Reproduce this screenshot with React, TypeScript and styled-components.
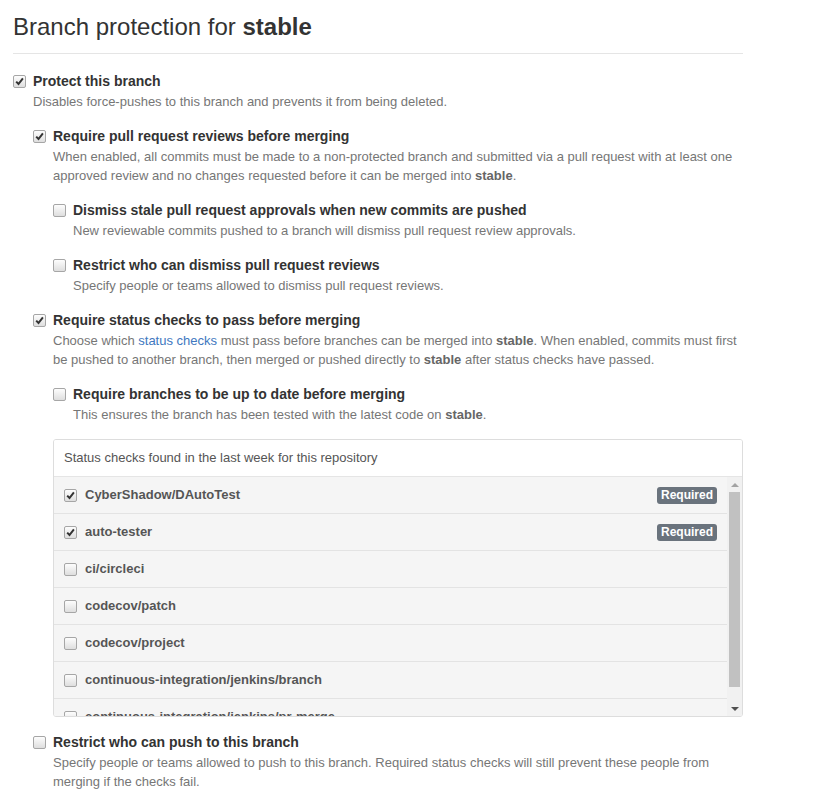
import React from "react";
import styled, { createGlobalStyle } from "styled-components";

const GlobalStyle = createGlobalStyle`
    html, body {
        margin: 0;
        padding: 0;
        background: #fff;
    }
    body {
        font-family: "Liberation Sans", Helvetica, Arial, sans-serif;
        font-size: 14px;
        line-height: 1.5;
        color: #333;
    }
`;

const checks = [
    { name: "CyberShadow/DAutoTest", checked: true, required: true },
    { name: "auto-tester", checked: true, required: true },
    { name: "ci/circleci" },
    { name: "codecov/patch" },
    { name: "codecov/project" },
    { name: "continuous-integration/jenkins/branch" },
    { name: "continuous-integration/jenkins/pr-merge" },
];

function Checkbox({ checked }: { checked?: boolean }) {
    return (
        <Box>
            {checked && (
                <svg width="9" height="9" viewBox="0 0 9 9">
                    <path d="M1.2 4.6 L3.5 7 L7.9 1.4" fill="none" stroke="#333" strokeWidth="2" />
                </svg>
            )}
        </Box>
    );
}

function Option({
    label,
    checked,
    children,
    note,
}: {
    label: string;
    checked?: boolean;
    note: React.ReactNode;
    children?: React.ReactNode;
}) {
    return (
        <Item>
            <Checkbox checked={checked} />
            <Body>
                <Label>{label}</Label>
                <Note>{note}</Note>
                {children && <Group>{children}</Group>}
            </Body>
        </Item>
    );
}

export default function App() {
    return (
        <>
            <GlobalStyle />
            <Page>
                <Title>
                    Branch protection for <strong>stable</strong>
                </Title>
                <Group $top>
                    <Option
                        checked
                        label="Protect this branch"
                        note="Disables force-pushes to this branch and prevents it from being deleted."
                    >
                        <Option
                            checked
                            label="Require pull request reviews before merging"
                            note={
                                <>
                                    When enabled, all commits must be made to a non-protected branch and submitted via
                                    a pull request with at least one approved review and no changes requested before it
                                    can be merged into <strong>stable</strong>.
                                </>
                            }
                        >
                            <Option
                                label="Dismiss stale pull request approvals when new commits are pushed"
                                note="New reviewable commits pushed to a branch will dismiss pull request review approvals."
                            />
                            <Option
                                label="Restrict who can dismiss pull request reviews"
                                note="Specify people or teams allowed to dismiss pull request reviews."
                            />
                        </Option>
                        <Option
                            checked
                            label="Require status checks to pass before merging"
                            note={
                                <>
                                    Choose which <Link href="#">status checks</Link> must pass before branches can be
                                    merged into <strong>stable</strong>. When enabled, commits must first be pushed to
                                    another branch, then merged or pushed directly to <strong>stable</strong> after
                                    status checks have passed.
                                </>
                            }
                        >
                            <Option
                                label="Require branches to be up to date before merging"
                                note={
                                    <>
                                        This ensures the branch has been tested with the latest code on{" "}
                                        <strong>stable</strong>.
                                    </>
                                }
                            />
                            <Panel>
                                <PanelHeader>Status checks found in the last week for this repository</PanelHeader>
                                <ListArea>
                                    <Rows>
                                        {checks.map(c => (
                                            <Row key={c.name}>
                                                <Checkbox checked={c.checked} />
                                                <RowName>{c.name}</RowName>
                                                {c.required && <Badge>Required</Badge>}
                                            </Row>
                                        ))}
                                    </Rows>
                                    <Scrollbar>
                                        <Arrow $up />
                                        <Thumb />
                                        <Arrow />
                                    </Scrollbar>
                                </ListArea>
                            </Panel>
                        </Option>
                        <Option
                            label="Restrict who can push to this branch"
                            note="Specify people or teams allowed to push to this branch. Required status checks will still prevent these people from merging if the checks fail."
                        />
                    </Option>
                </Group>
            </Page>
        </>
    );
}

const Page = styled.div`
    width: 730px;
    padding: 12px 0 20px 13px;
`;

const Title = styled.h2`
    margin: 0;
    padding-bottom: 11px;
    border-bottom: 1px solid #e5e5e5;
    font-size: 24px;
    font-weight: normal;
    line-height: 30px;
    color: #333;

    strong {
        font-weight: bold;
    }
`;

const Group = styled.div<{ $top?: boolean }>`
    display: flex;
    flex-direction: column;
    gap: 15px;
    padding-top: ${p => (p.$top ? "17px" : "15px")};
`;

const Item = styled.div`
    display: grid;
    grid-template-columns: 20px 1fr;
    align-items: start;
`;

const Box = styled.span`
    box-sizing: border-box;
    width: 13px;
    height: 13px;
    margin-top: 4px;
    border: 1px solid #a6a6a6;
    border-radius: 2px;
    background: linear-gradient(#fdfdfd, #dedede);
    display: flex;
    align-items: center;
    justify-content: center;
    flex-shrink: 0;
`;

const Body = styled.div`
    display: flex;
    flex-direction: column;
    min-width: 0;
`;

const Label = styled.label`
    font-weight: bold;
    font-size: 14px;
    line-height: 21px;
    color: #333;
`;

const Note = styled.p`
    margin: 0;
    font-size: 13px;
    line-height: 19px;
    color: #767676;

    strong {
        font-weight: bold;
        color: #666;
    }
`;

const Link = styled.a`
    color: #4078c0;
    text-decoration: none;
`;

const Panel = styled.div`
    border: 1px solid #ddd;
    border-radius: 3px;
    overflow: hidden;
`;

const PanelHeader = styled.div`
    padding: 9px 10px;
    font-size: 13px;
    line-height: 18px;
    color: #555;
    background: #fff;
    border-bottom: 1px solid #e5e5e5;
`;

const ListArea = styled.div`
    display: flex;
    height: 239px;
    background: #f5f5f5;
`;

const Rows = styled.div`
    flex: 1;
    overflow: hidden;
`;

const Row = styled.div`
    display: flex;
    align-items: center;
    gap: 8px;
    height: 36px;
    padding: 0 10px;
    border-bottom: 1px solid #e3e3e3;

    ${Box} {
        margin-top: 0;
    }
`;

const RowName = styled.span`
    flex: 1;
    font-size: 13px;
    font-weight: bold;
    color: #555;
`;

const Badge = styled.span`
    padding: 0 4px;
    height: 17px;
    line-height: 17px;
    font-size: 12px;
    font-weight: bold;
    color: #fff;
    background: #6a737d;
    border-radius: 3px;
`;

const Scrollbar = styled.div`
    width: 15px;
    display: flex;
    flex-direction: column;
    background: #f1f1f1;
`;

const Arrow = styled.div<{ $up?: boolean }>`
    height: 15px;
    display: flex;
    align-items: center;
    justify-content: center;
    margin-top: ${p => (p.$up ? "0" : "auto")};

    &::before {
        content: "";
        border-left: 4px solid transparent;
        border-right: 4px solid transparent;
        ${p => (p.$up ? "border-bottom: 4px solid #a3a3a3;" : "border-top: 4px solid #505050;")}
    }
`;

const Thumb = styled.div`
    height: 195px;
    margin: 0 2px;
    background: #c1c1c1;
`;
